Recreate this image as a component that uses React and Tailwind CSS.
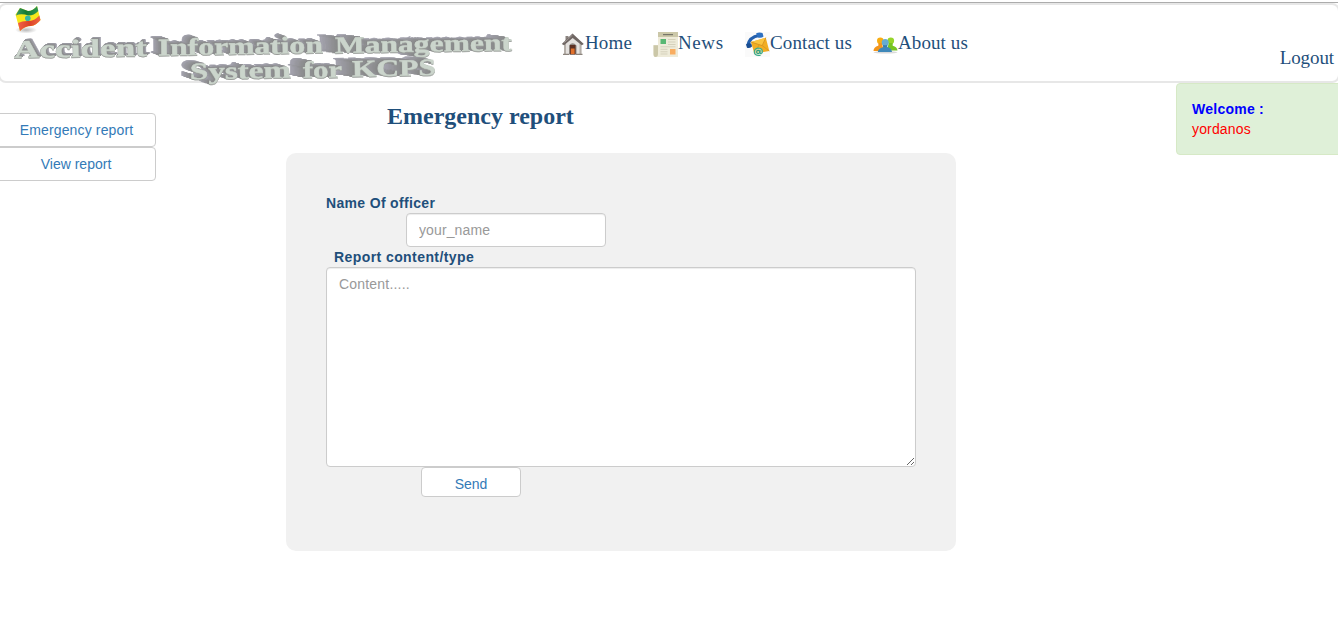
import React from "react";

const DEPTH_STEPS = 12;

const mix = (from, to, t) => from.map((v, i) => Math.round(v + (to[i] - v) * t));

// Right-most words come first so that their depth stays behind the word to their left.
const WORDS = [
  { id: "w3", text: "Management", x: 335, y: 53, width: 177, size: 23.5, dx: -18, dy: -2.6 },
  { id: "w2", text: "Information", x: 158, y: 55.4, width: 165, size: 24, dx: -8, dy: -3.2 },
  { id: "w1", text: "Accident", x: 14, y: 57.8, width: 133, size: 25, dx: 2.5, dy: -2.4 },
  { id: "w6", text: "KCPS", x: 352, y: 76.4, width: 84, size: 23.5, dx: -19, dy: -2.6 },
  { id: "w5", text: "for", x: 303, y: 77.8, width: 39, size: 23.5, dx: -15, dy: -3.2 },
  { id: "w4", text: "System", x: 190, y: 79.2, width: 101, size: 23.5, dx: -10, dy: -3 },
];

// Builds the receding side of a word from offset silhouettes, farthest first.
function DepthFilter({ id, dx, dy }) {
  const steps = Array.from({ length: DEPTH_STEPS }, (_, i) => DEPTH_STEPS - i);
  return (
    <filter id={id} filterUnits="userSpaceOnUse" x="0" y="0" width="520" height="90" colorInterpolationFilters="sRGB">
      {steps.map((i) => {
        const t = i / DEPTH_STEPS;
        const rgb = mix([134, 135, 134], [163, 162, 173], t);
        return (
          <React.Fragment key={i}>
            <feOffset in="SourceAlpha" dx={dx * t} dy={dy * t} result={`o${i}`} />
            <feFlood floodColor={`rgb(${rgb.join(",")})`} />
            <feComposite operator="in" in2={`o${i}`} result={`c${i}`} />
          </React.Fragment>
        );
      })}
      <feOffset in="SourceAlpha" dx="0.2" dy="0.6" result="under" />
      <feFlood floodColor="#9a9e9a" />
      <feComposite operator="in" in2="under" result="underColor" />
      <feMerge>
        {steps.map((i) => (
          <feMergeNode key={i} in={`c${i}`} />
        ))}
        <feMergeNode in="underColor" />
        <feMergeNode in="SourceGraphic" />
      </feMerge>
    </filter>
  );
}

function Banner() {
  return (
    <svg width="520" height="90" viewBox="0 0 520 90" className="block shrink-0" fontFamily="'Liberation Serif', serif" fontWeight="bold">
      <defs>
        <linearGradient id="green" x1="0" x2="1">
          <stop offset="0" stopColor="#3c9b63" />
          <stop offset="0.45" stopColor="#157a34" />
          <stop offset="1" stopColor="#2f9850" />
        </linearGradient>
        <linearGradient id="red" x1="0" x2="1">
          <stop offset="0" stopColor="#f0614a" />
          <stop offset="0.5" stopColor="#dc4327" />
          <stop offset="1" stopColor="#f06645" />
        </linearGradient>
        <radialGradient id="shade">
          <stop offset="0" stopColor="#888" stopOpacity="0.6" />
          <stop offset="1" stopColor="#888" stopOpacity="0" />
        </radialGradient>
        {WORDS.map((w) => (
          <DepthFilter key={w.id} id={w.id} dx={w.dx} dy={w.dy} />
        ))}
      </defs>
      <ellipse cx="26" cy="30" rx="11" ry="3.5" fill="url(#shade)" />
      <path d="M15.5 14.5 L20 8 Q24 9.5 28 11 Q33 11 37 6 L40.5 20 Q36 25.5 31 26 Q25 26 20 31 Z" fill="#f7e81b" />
      <path d="M17 13 L20 8 Q24 9.5 28 11 Q33 11 37 6 L38.3 11 Q34 15.5 28.5 15.5 Q21 13 16 15.5 Z" fill="url(#green)" />
      <path d="M18 23 Q23 20.5 29 21 Q35 20.5 39.3 15.5 L40.5 20 Q36 25.5 31 26 Q25 26 20 31 Z" fill="url(#red)" />
      <circle cx="27.8" cy="18.2" r="2.8" fill="#38b6a6" />
      {WORDS.map((w) => (
        <g key={w.id} filter={`url(#${w.id})`}>
          <text
            transform={`rotate(-0.9 ${w.x} ${w.y})`}
            x={w.x}
            y={w.y}
            fontSize={w.size}
            textLength={w.width}
            lengthAdjust="spacingAndGlyphs"
            fill="#cbd5cc"
            stroke="#cbd5cc"
            strokeWidth="0.4"
          >
            {w.text}
          </text>
        </g>
      ))}
    </svg>
  );
}

function HomeIcon() {
  return (
    <svg width="24" height="24" viewBox="0 0 24 24" className="block shrink-0">
      <path d="M4.5 4 h3 v5 h-3 Z" fill="#8b8480" />
      <path d="M3 11.5 L11.5 3 L20.5 11.5 V22 H3 Z" fill="#e4e1de" />
      <path d="M3 12 V22 H5 V11 Z M20.5 12 V22 H18.5 V11 Z" fill="#b5afa9" />
      <path d="M0.8 12 L11.5 1.5 L22.8 12 L20.8 13.3 L11.7 5.9 L3 13.3 Z" fill="#6f6663" />
      <path d="M3.4 10.5 L11.5 3" stroke="#a9a29f" strokeWidth="0.8" />
      <path d="M8 13.5 Q11.5 9 15.5 13.5 V22.5 H8 Z" fill="#8d8580" />
      <rect x="9" y="13" width="5.5" height="9.5" fill="#5b3022" />
      <rect x="9.8" y="16.5" width="3.8" height="5.5" fill="#e0702b" />
      <path d="M2 22.3 H8 M15 22.3 H21.5" stroke="#8c847d" strokeWidth="1.2" />
    </svg>
  );
}

function NewsIcon() {
  return (
    <svg width="25" height="25" viewBox="0 0 25 25" className="block shrink-0">
      <path d="M5 0 H25 V25 H2 Q0.5 25 0.5 23 V13 H5 Z" fill="#eeebd9" />
      <path d="M0.5 13.3 H5 V22 Q5 25 2.5 25 Q0.5 25 0.5 22 Z" fill="#cbc7a8" />
      <rect x="5" width="20" height="5" fill="#cbc7a8" />
      <rect x="10" y="2" width="10" height="1.2" fill="#77766a" />
      <rect x="7.5" y="7" width="5.5" height="5" fill="#59b873" />
      <rect x="17" y="17" width="5.5" height="5.5" fill="#f9ad60" />
      <path d="M15 7.5 H22.5 M15 10 H22.5 M15 12.5 H22.5 M7.5 14.8 H22.5 M7.5 17.3 H14.5 M7.5 19.8 H14.5 M7.5 22 H14.5" stroke="#d5d1bb" strokeWidth="1" />
    </svg>
  );
}

function ContactIcon() {
  return (
    <svg width="25" height="25" viewBox="0 0 25 25" className="block shrink-0">
      <rect width="25" height="25" fill="#fafafa" />
      <path d="M3 13 Q4.5 5 14 3.5" fill="none" stroke="#2460ad" strokeWidth="3.2" />
      <path d="M11 1.5 Q14 0 17.5 1 L18.5 4.5 Q16.5 6.5 13 5.5 Z" fill="#2d70c2" />
      <path d="M1 12.5 Q3 10.5 6.5 11.5 L7 14.5 Q4.5 16.7 2 15.8 Z" fill="#194d92" />
      <path d="M6 10 L20.8 5.7 L24.3 19 L9.3 21.6 Z" fill="#f2ad22" />
      <path d="M6 10 L17.2 13.6 L20.8 5.7" fill="#fbc440" stroke="#d0901f" strokeWidth="0.8" />
      <path d="M9.3 21.6 L14.2 12.7 M24.3 19 L17.2 13.6" stroke="#d39221" strokeWidth="0.7" />
      <circle cx="13.5" cy="20" r="4.3" fill="#c9e4c7" fillOpacity="0.7" />
      <circle cx="13.2" cy="20" r="1.6" fill="none" stroke="#2f9d80" strokeWidth="1.1" />
      <path d="M15 18 V20.7 Q15.8 22.5 17.3 20.5 Q17.8 16.2 13.3 16 Q9.1 16.5 9.3 20.3 Q10.1 24.4 15.6 23.3" fill="none" stroke="#35a78a" strokeWidth="1.1" />
    </svg>
  );
}

function AboutIcon() {
  return (
    <svg width="25" height="25" viewBox="0 0 25 25" className="block shrink-0">
      <ellipse cx="12.5" cy="20.3" rx="12" ry="1.3" fill="#dadada" />
      <circle cx="7.3" cy="8.7" r="3.3" fill="#f8ad12" />
      <path d="M5.5 11 H9.5 V14 L11 19 H0.5 Q0.5 15.2 5.3 13.8 Z" fill="#f3951c" />
      <circle cx="17.8" cy="8.7" r="3.3" fill="#96d52a" />
      <path d="M15.7 11 H19.7 V13.7 Q24.3 15 24.5 18.5 H14 Z" fill="#76c421" />
      <circle cx="12.2" cy="10.5" r="3.5" fill="#66acd0" />
      <path d="M10 13 H14.3 V15 Q18.5 16 19 20 H4.8 Q5.3 16.4 10 15.3 Z" fill="#3f88b9" />
      <path d="M10.3 13.8 Q12.3 15.8 14.1 13.8" fill="none" stroke="#347ba9" strokeWidth="0.9" />
    </svg>
  );
}

function NavLink({ icon, label, className }) {
  return (
    <a href="#" className={`flex h-[25px] items-start ${className}`}>
      {icon}
      <span className="whitespace-nowrap leading-[22px]">{label}</span>
    </a>
  );
}

export default function App() {
  return (
    <div className="h-[626px] w-full overflow-hidden bg-white pt-[2px] font-['Liberation_Sans',Arial,sans-serif] text-[14px] leading-5">
      <header className="-mx-[2px] h-[81px] rounded-b-[8px] border-t border-t-[#acacac]">
        <div className="flex h-[80px] rounded-[8px] border-2 border-[#e7e7e7] font-['Liberation_Serif',serif] text-[19px] text-[#1f4f7b]">
          <div className="-mt-[5px] h-[90px] w-[520px] shrink-0">
            <Banner />
          </div>
          <nav className="flex pt-[27px]">
            <NavLink className="ml-[41px] w-[92px] tracking-[0.15px]" icon={<HomeIcon />} label="Home" />
            <NavLink className="w-[92px] tracking-[0.6px]" icon={<NewsIcon />} label="News" />
            <NavLink className="w-[128px] tracking-[0.12px]" icon={<ContactIcon />} label="Contact us" />
            <NavLink className="w-[100px] tracking-[0.1px]" icon={<AboutIcon />} label="About us" />
          </nav>
          <a href="#" className="ml-auto mr-[4px] mt-[42px] h-[22px] leading-[22px] tracking-[-0.1px]">Logout</a>
        </div>
      </header>

      <div className="flex items-start">
        <aside className="mt-[30px] flex w-[156px] shrink-0 flex-col text-[#337ab7]">
          <button className="-ml-[4px] h-[34px] rounded-[4px] border border-[#ccc] pl-[1px] tracking-[0.14px]">Emergency report</button>
          <button className="-ml-[4px] h-[34px] rounded-[4px] border border-[#ccc]">View report</button>
        </aside>

        <main className="ml-[130px] w-[670px] shrink-0 text-[#1f4f7b]">
          <h1 className="ml-[101px] mt-[20px] h-[50px] font-['Liberation_Serif',serif] text-[24px] font-bold leading-[26px]">Emergency report</h1>
          <form className="flex h-[398px] flex-col items-start rounded-[10px] bg-[#f1f1f1] p-10">
            <label className="h-5 font-bold tracking-[0.33px]">Name Of officer</label>
            <input
              placeholder="your_name"
              className="ml-[80px] h-[34px] w-[200px] rounded-[4px] border border-[#ccc] bg-white px-3 tracking-[0.12px] shadow-[inset_0_1px_1px_rgba(0,0,0,0.075)] placeholder:text-[#999]"
            />
            <label className="ml-2 h-5 font-bold tracking-[0.42px]">Report content/type</label>
            <textarea
              placeholder="Content....."
              className="block h-[200px] w-[590px] shrink-0 rounded-[4px] border border-[#ccc] bg-white px-3 py-[6px] tracking-[0.2px] shadow-[inset_0_1px_1px_rgba(0,0,0,0.075)] placeholder:text-[#999]"
            />
            <button type="button" className="ml-[95px] h-[30px] w-[100px] shrink-0 rounded-[4px] border border-[#ccc] bg-white pt-[3px] text-[#337ab7]">Send</button>
          </form>
        </main>

        <aside className="-mr-[4px] ml-auto h-[72px] w-[166px] rounded-[4px] border border-[#d6e9c6] bg-[#dff0d8] px-[15px] py-[15px]">
          <div className="font-bold tracking-[0.25px] text-[#0000ff]">Welcome :</div>
          <div className="tracking-[0.15px] text-[#ff0000]">yordanos</div>
        </aside>
      </div>
    </div>
  );
}
